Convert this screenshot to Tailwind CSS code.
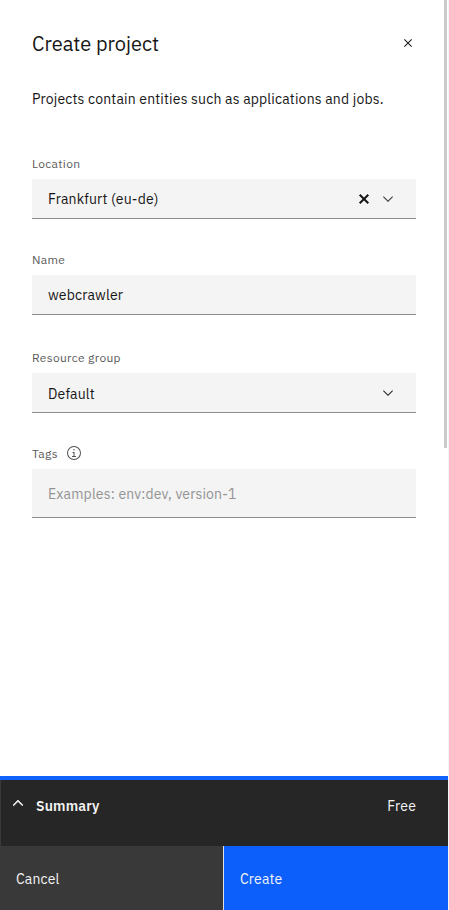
<!DOCTYPE html>
<html lang="en">
<head>
<meta charset="utf-8">
<title>Create project</title>
<script src="https://cdn.jsdelivr.net/npm/@tailwindcss/browser@4"></script>
</head>
<body class="h-[910px] overflow-hidden bg-white font-['IBM_Plex_Sans',Roboto,sans-serif] text-sm text-[#161616]">
<div class="relative flex h-[910px] w-[449px] flex-col border-r border-[#f4f4f4]">
  <div class="absolute top-0 right-px h-[447.5px] w-[3px] bg-[#cacaca]"></div>
  <main class="flex flex-1 flex-col px-8">
    <header class="mt-[30px] flex h-7 items-center justify-between">
      <h1 class="text-xl leading-7">Create project</h1>
      <button class="-mt-0.5 flex size-4 items-center justify-center" aria-label="Close">
        <svg class="size-4" viewBox="0 0 32 32" fill="#161616"><path d="M24 9.4 22.6 8 16 14.6 9.4 8 8 9.4 14.6 16 8 22.6 9.4 24 16 17.4 22.6 24 24 22.6 17.4 16z"/></svg>
      </button>
    </header>
    <p class="mt-8 h-[18px] leading-[18px] tracking-[0.17px] whitespace-nowrap">Projects contain entities such as applications and jobs.</p>
    <label class="mt-12 h-4 text-xs leading-4 tracking-[0.32px] text-[#5a5a5a]">Location</label>
    <div class="mt-[7px] flex h-10 items-center border-b border-[#8d8d8d] bg-[#f4f4f4] pr-5 pl-4">
      <span class="tracking-[0.16px]">Frankfurt (eu-de)</span>
      <svg class="ml-auto size-4" viewBox="0 0 16 16" fill="none" stroke="#161616" stroke-width="2"><path d="M3.7 3.7 12.3 12.3M12.3 3.7 3.7 12.3"/></svg>
      <svg class="ml-2 size-4" viewBox="0 0 16 16" fill="#393939"><path d="M8 11 3 6 3.7 5.3 8 9.6 12.3 5.3 13 6z"/></svg>
    </div>
    <label class="mt-[33px] h-4 text-xs leading-4 tracking-[0.32px] text-[#5a5a5a]">Name</label>
    <div class="mt-[7px] flex h-10 items-center border-b border-[#8d8d8d] bg-[#f4f4f4] px-4">
      <span class="tracking-[0.16px]">webcrawler</span>
    </div>
    <label class="mt-[35px] h-4 text-xs leading-4 tracking-[0.32px] text-[#5a5a5a]">Resource group</label>
    <div class="mt-[7px] flex h-10 items-center border-b border-[#8d8d8d] bg-[#f4f4f4] pr-5 pl-4">
      <span class="mt-0.5 tracking-[0.16px]">Default</span>
      <svg class="ml-auto size-4" viewBox="0 0 16 16" fill="#262626"><path d="M8 11 3 6 3.7 5.3 8 9.6 12.3 5.3 13 6z"/></svg>
    </div>
    <div class="mt-[32px] flex h-4 items-center text-xs leading-4 text-[#5a5a5a]">
      <label class="mt-px w-[34px] tracking-[0.32px]">Tags</label>
      <svg class="size-4" viewBox="0 0 32 32" fill="#525252"><path d="M17 22v-8h-4v2h2v6h-3v2h8v-2zM16 8a1.5 1.5 0 1 0 1.5 1.5A1.5 1.5 0 0 0 16 8z"/><path d="M16 30a14 14 0 1 1 14-14 14 14 0 0 1-14 14zm0-26a12 12 0 1 0 12 12A12 12 0 0 0 16 4z"/></svg>
    </div>
    <div class="mt-2 flex h-[49px] items-center border-b border-[#8d8d8d] bg-[#f4f4f4] px-4 pt-0.5 text-[#939393]">
      <span class="tracking-[0.16px]">Examples: env:dev, version-1</span>
    </div>
  </main>
  <footer class="text-[#f4f4f4]">
    <div class="h-1 bg-[#0f62fe]"></div>
    <div class="flex h-[66px] items-start border-l border-[#393939] bg-[#262626] pt-[17px] pr-8 pl-[9px] tracking-[0.16px]">
      <svg class="-mt-0.5 size-4" viewBox="0 0 16 16" fill="#f4f4f4" stroke="#f4f4f4" stroke-width=".7"><path d="M8 5 13 10 12.3 10.7 8 6.4 3.7 10.7 3 10z"/></svg>
      <span class="ml-[10px] leading-[18px] font-semibold">Summary</span>
      <span class="ml-auto leading-[18px]">Free</span>
    </div>
    <div class="flex h-16 tracking-[0.16px]">
      <button class="flex w-[223px] items-center bg-[#393939] px-4 pt-0.5">Cancel</button>
      <button class="flex flex-1 items-center border-l border-[#e0e0e0] bg-[#0c5ffb] px-4 pt-0.5">Create</button>
    </div>
  </footer>
</div>
</body>
</html>
